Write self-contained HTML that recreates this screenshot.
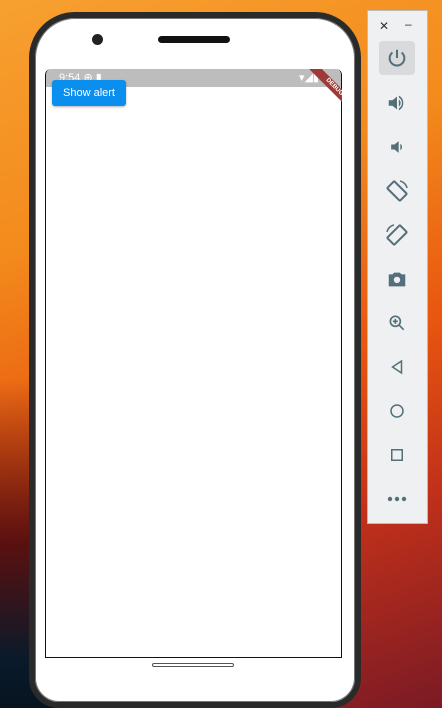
<!DOCTYPE html>
<html style="width:442px;height:708px;overflow:hidden"><head><style>
*{margin:0;padding:0;box-sizing:border-box}
body{width:442px;height:708px;overflow:hidden;position:relative;font-family:"Liberation Sans",sans-serif;
background:linear-gradient(160deg,#f7a030 0%,#f38a1c 30%,#e8560f 55%,#c0301a 75%,#7a1a25 100%);}
.bl{position:absolute;left:0;top:380px;width:60px;height:328px;background:linear-gradient(180deg,rgba(120,30,10,0) 0%,#5a1010 50%,#0a1a2a 85%,#061420 100%)}
.phone{position:absolute;left:29px;top:12px;width:332px;height:696px;background:#fff;border:6px solid #2a2a2a;border-radius:46px 46px 30px 30px;box-shadow:0 0 0 1px #777 inset}
.cam{position:absolute;left:92px;top:34px;width:11px;height:11px;border-radius:50%;background:#222}
.spk{position:absolute;left:158px;top:36px;width:72px;height:7px;border-radius:4px;background:#111}
.screen{position:absolute;left:45px;top:69px;width:297px;height:589px;background:#fff;border:1px solid #111;border-top:none;border-radius:6px 6px 0 0}
.sb{position:absolute;left:46px;top:69px;width:295px;height:18px;background:#bdbdbd;border-radius:6px 6px 0 0;color:#fff;font-size:11px}
.btn{position:absolute;left:52px;top:80px;width:74px;height:26px;background:#0a8fef;border-radius:3px;color:#fff;font-size:11px;text-align:center;line-height:26px;box-shadow:0 1px 2px rgba(0,0,0,.3)}
.home{position:absolute;left:152px;top:663px;width:82px;height:4px;border:1px solid #555;border-radius:2px}
.panel{position:absolute;left:367px;top:10px;width:61px;height:514px;background:#eef0f1;border:1px solid #bbb}
.ic{position:absolute;left:11px;width:36px;height:34px;display:flex;align-items:center;justify-content:center}
</style></head><body>
<div class="bl"></div>
<div class="phone"></div>
<div class="cam"></div><div class="spk"></div>
<div class="screen"></div>
<div class="sb"><span style="position:absolute;left:13px;top:2px">9:54 ⊕ ▮</span><span style="position:absolute;right:22px;top:2px">▾◢▮</span></div>
<div style="position:absolute;left:300px;top:69px;width:42px;height:42px;overflow:hidden"><div style="position:absolute;left:4px;top:14px;width:60px;height:9px;background:#a03a3a;transform:rotate(45deg);color:#fff;font-size:6px;text-align:center;line-height:9px;font-weight:bold">DEBUG</div></div>
<div class="btn">Show alert</div>
<div class="home"></div>
<div class="panel">
<div style="position:absolute;left:11px;top:8px;font-size:12px;color:#333">✕</div>
<div style="position:absolute;left:37px;top:6px;font-size:12px;color:#333">–</div>
<div class="ic" style="top:30px;background:#d8dadb;border-radius:4px"><svg width="22" height="22" viewBox="0 0 24 24" fill="none" stroke="#546e7a" stroke-width="2.2"><path d="M12 3v9"/><path d="M7 6a8 8 0 1 0 10 0"/></svg></div>
<div class="ic" style="top:75px"><svg width="22" height="22" viewBox="0 0 24 24" fill="#546e7a"><path d="M3 9h4l5-4v14l-5-4H3z"/><path d="M14 8a5 5 0 0 1 0 8z"/><path d="M14 4a9 9 0 0 1 0 16v-2a7 7 0 0 0 0-12z"/></svg></div>
<div class="ic" style="top:119px"><svg width="20" height="20" viewBox="0 0 24 24" fill="#546e7a"><path d="M5 9h4l5-4v14l-5-4H5z"/><path d="M16 8a5 5 0 0 1 0 8z"/></svg></div>
<div class="ic" style="top:163px"><svg width="24" height="24" viewBox="0 0 24 24" fill="none" stroke="#546e7a" stroke-width="2"><rect x="7" y="3" width="10" height="18" rx="1" transform="rotate(-45 12 12)"/><path d="M15 2a9 9 0 0 1 7 7" stroke-width="1.5"/></svg></div>
<div class="ic" style="top:207px"><svg width="24" height="24" viewBox="0 0 24 24" fill="none" stroke="#546e7a" stroke-width="2"><rect x="7" y="3" width="10" height="18" rx="1" transform="rotate(45 12 12)"/><path d="M2 9a9 9 0 0 1 7-7" stroke-width="1.5"/></svg></div>
<div class="ic" style="top:251px"><svg width="22" height="22" viewBox="0 0 24 24" fill="#546e7a"><path d="M3 7h4l2-2h6l2 2h4v13H3z"/><circle cx="12" cy="13" r="3.5" fill="#eef0f1"/></svg></div>
<div class="ic" style="top:295px"><svg width="20" height="20" viewBox="0 0 24 24" fill="none" stroke="#546e7a" stroke-width="2"><circle cx="10" cy="10" r="6"/><path d="M14.5 14.5L20 20M10 7v6M7 10h6"/></svg></div>
<div class="ic" style="top:339px"><svg width="18" height="18" viewBox="0 0 24 24" fill="none" stroke="#546e7a" stroke-width="2"><path d="M18 4L6 12l12 8z"/></svg></div>
<div class="ic" style="top:383px"><svg width="18" height="18" viewBox="0 0 24 24" fill="none" stroke="#546e7a" stroke-width="2"><circle cx="12" cy="12" r="8"/></svg></div>
<div class="ic" style="top:427px"><svg width="18" height="18" viewBox="0 0 24 24" fill="none" stroke="#546e7a" stroke-width="2"><rect x="5" y="5" width="14" height="14"/></svg></div>
<div class="ic" style="top:471px"><svg width="20" height="6" viewBox="0 0 20 6" fill="#546e7a"><circle cx="3" cy="3" r="2.2"/><circle cx="10" cy="3" r="2.2"/><circle cx="17" cy="3" r="2.2"/></svg></div>
</div>
</body></html>
